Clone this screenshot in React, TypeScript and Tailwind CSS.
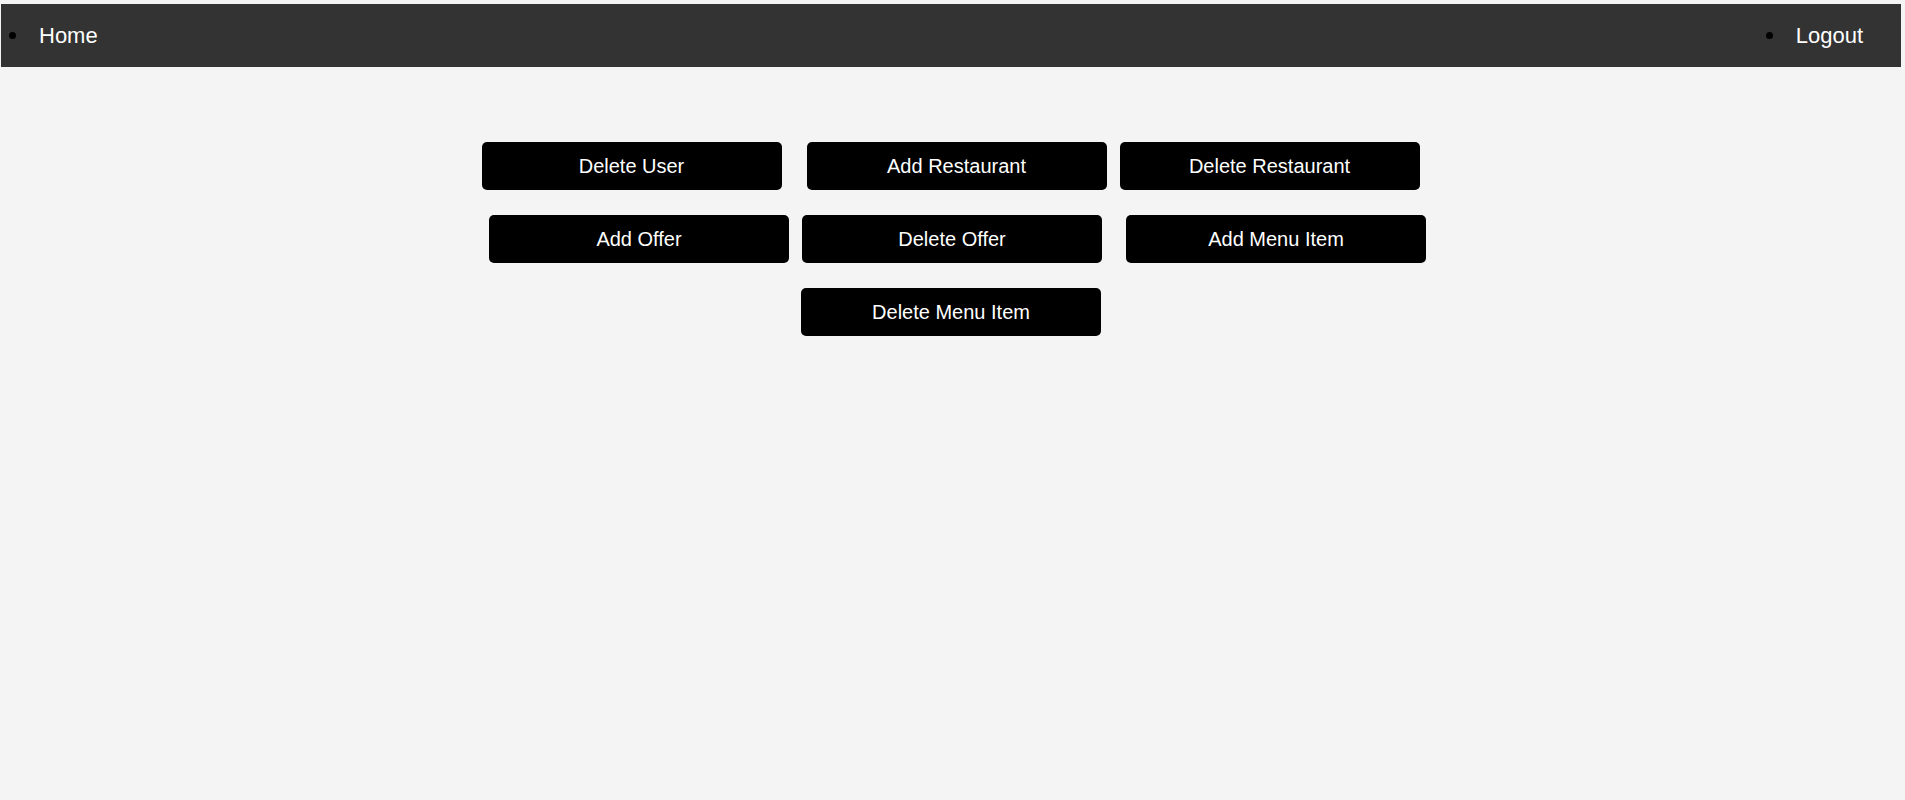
import React from 'react';

const NavItem: React.FC<{ label: string }> = ({ label }) => (
  <li className="flex items-center gap-[23px]">
    <span className="w-[7px] h-[7px] rounded-full bg-black" />
    <a href="#" className="text-white text-[22px] leading-none">
      {label}
    </a>
  </li>
);

const AdminButton: React.FC<{ label: string }> = ({ label }) => (
  <button className="w-[300px] h-[48px] rounded-[5px] bg-black text-white text-[20px] leading-none">
    {label}
  </button>
);

export default function App() {
  return (
    <div
      className="min-h-screen bg-[#f4f4f4] pt-[4px]"
      style={{ fontFamily: '"Liberation Sans", Arial, sans-serif' }}
    >
      <nav className="ml-[1px] mr-[4px] h-[63px] bg-[#333333]">
        <ul className="h-full flex items-center justify-between pl-[8px] pr-[38px]">
          <NavItem label="Home" />
          <NavItem label="Logout" />
        </ul>
      </nav>

      <div className="mt-[75px] pr-[3px] flex flex-col items-center gap-[25px]">
        <div className="flex pr-[1px]">
          <AdminButton label="Delete User" />
          <div className="ml-[25px]">
            <AdminButton label="Add Restaurant" />
          </div>
          <div className="ml-[13px]">
            <AdminButton label="Delete Restaurant" />
          </div>
        </div>
        <div className="flex pl-[13px]">
          <AdminButton label="Add Offer" />
          <div className="ml-[13px]">
            <AdminButton label="Delete Offer" />
          </div>
          <div className="ml-[24px]">
            <AdminButton label="Add Menu Item" />
          </div>
        </div>
        <div className="flex">
          <AdminButton label="Delete Menu Item" />
        </div>
      </div>
    </div>
  );
}
